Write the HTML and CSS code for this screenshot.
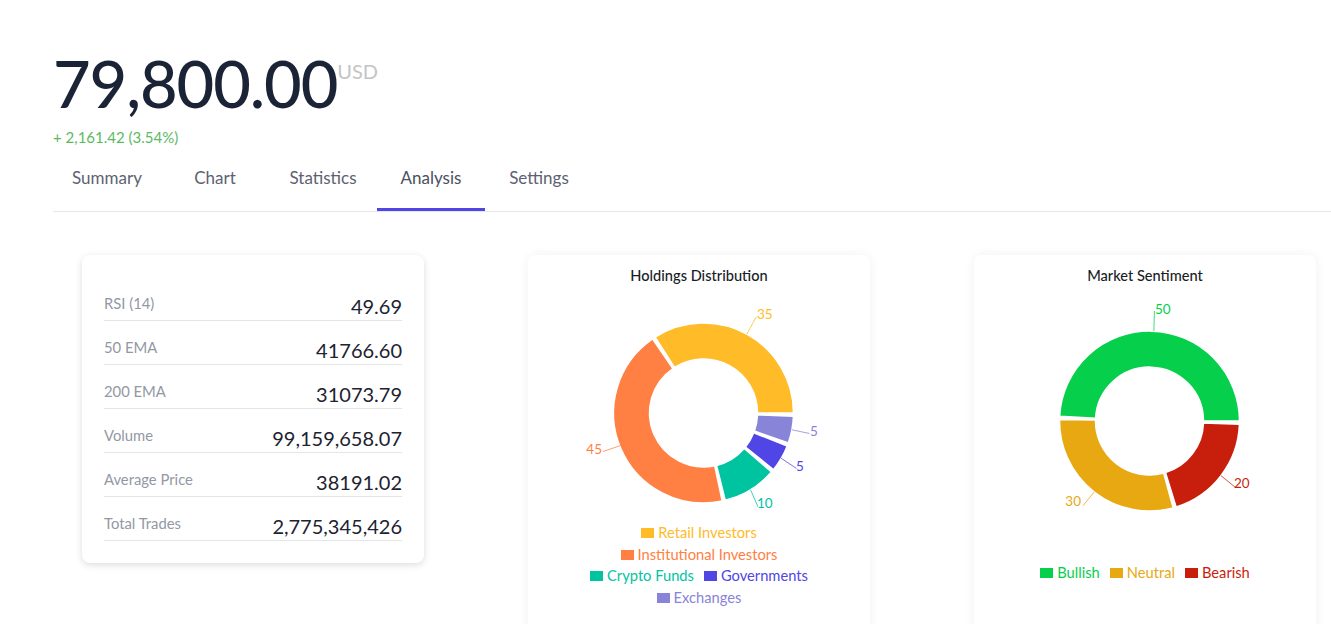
FILE: index.html
```html
<!DOCTYPE html>
<html lang="en">
<head>
<meta charset="utf-8">
<title>Analysis</title>
<link rel="stylesheet" href="styles.css">
</head>
<body>
<div class="page">
  <header class="quote">
    <div class="price-row">
      <span class="price">79,800.00</span>
      <span class="currency">USD</span>
    </div>
    <div class="change">+ 2,161.42 (3.54%)</div>
  </header>

  <nav class="tabs">
    <a class="tab">Summary</a>
    <a class="tab">Chart</a>
    <a class="tab">Statistics</a>
    <a class="tab tab--active">Analysis</a>
    <a class="tab">Settings</a>
  </nav>

  <section class="cards">
    <div class="card stats">
      <div class="stat"><span class="stat__label">RSI (14)</span><span class="stat__value">49.69</span></div>
      <div class="stat"><span class="stat__label">50 EMA</span><span class="stat__value">41766.60</span></div>
      <div class="stat"><span class="stat__label">200 EMA</span><span class="stat__value">31073.79</span></div>
      <div class="stat"><span class="stat__label">Volume</span><span class="stat__value">99,159,658.07</span></div>
      <div class="stat"><span class="stat__label">Average Price</span><span class="stat__value">38191.02</span></div>
      <div class="stat"><span class="stat__label">Total Trades</span><span class="stat__value">2,775,345,426</span></div>
    </div>

    <div class="card chart-card">
      <h3 class="chart-card__title">Holdings Distribution</h3>
      <svg class="donut donut--holdings" viewBox="0 0 342 232" width="342" height="232">
        <g stroke="#fff" stroke-width="1.5">
          <path fill="#FFBB28" d="M265.5 123 A90 90 0 0 0 127.14 47.09 L146.49 77.46 A54 54 0 0 1 229.5 123 Z"/>
          <path fill="#FF8042" d="M124.52 48.83 A90 90 0 0 0 194.21 211.03 L186.73 175.82 A54 54 0 0 1 144.91 78.50 Z"/>
          <path fill="#00C49F" d="M197.27 210.33 A90 90 0 0 0 243.42 182.05 L216.25 158.43 A54 54 0 0 1 188.56 175.40 Z"/>
          <path fill="#4F46E5" d="M245.44 179.64 A90 90 0 0 0 259.24 155.99 L225.74 142.79 A54 54 0 0 1 217.46 156.98 Z"/>
          <path fill="#8884D8" d="M260.33 153.04 A90 90 0 0 0 265.45 126.14 L229.47 124.88 A54 54 0 0 1 226.40 141.03 Z"/>
        </g>
        <g fill="none" stroke-width="1" opacity="0.75">
          <line x1="218.8" y1="44.1" x2="228.4" y2="26.6" stroke="#FFBB28"/>
          <line x1="92.8" y1="155.5" x2="75.0" y2="161.5" stroke="#FF8042"/>
          <line x1="222.5" y1="199.7" x2="230.0" y2="216.8" stroke="#00C49F"/>
          <line x1="253.2" y1="168.3" x2="268.5" y2="178.4" stroke="#4F46E5"/>
          <line x1="263.9" y1="139.8" x2="281.6" y2="143.5" stroke="#8884D8"/>
        </g>
        <g class="donut__labels">
          <text x="229" y="24" fill="#FFBB28">35</text>
          <text x="74" y="158.5" fill="#FF8042" text-anchor="end">45</text>
          <text x="229" y="213" fill="#00C49F">10</text>
          <text x="268" y="175.5" fill="#4F46E5">5</text>
          <text x="282" y="140.5" fill="#8884D8">5</text>
        </g>
      </svg>
      <ul class="legend legend--holdings">
        <li class="legend__item legend__item--retail"><i class="legend__icon"></i>Retail Investors</li>
        <li class="legend__item legend__item--inst"><i class="legend__icon"></i>Institutional Investors</li>
        <li class="legend__item legend__item--crypto"><i class="legend__icon"></i>Crypto Funds</li>
        <li class="legend__item legend__item--gov"><i class="legend__icon"></i>Governments</li>
        <li class="legend__item legend__item--exch"><i class="legend__icon"></i>Exchanges</li>
      </ul>
    </div>

    <div class="card chart-card">
      <h3 class="chart-card__title">Market Sentiment</h3>
      <svg class="donut donut--sentiment" viewBox="0 0 342 272" width="342" height="272">
        <g stroke="#fff" stroke-width="1.5">
          <path fill="#05CF4B" d="M265.5 131 A90 90 0 0 0 85.63 126.29 L121.58 128.18 A54 54 0 0 1 229.5 131 Z"/>
          <path fill="#E7A811" d="M85.52 129.42 A90 90 0 0 0 199.10 217.85 L189.66 183.11 A54 54 0 0 1 121.51 130.05 Z"/>
          <path fill="#C81E0C" d="M202.11 216.98 A90 90 0 0 0 265.45 134.14 L229.47 132.88 A54 54 0 0 1 191.47 182.59 Z"/>
        </g>
        <g fill="none" stroke-width="1" opacity="0.75">
          <line x1="179.9" y1="41" x2="180.4" y2="21" stroke="#05CF4B"/>
          <line x1="120.2" y1="202" x2="108.9" y2="215.8" stroke="#E7A811"/>
          <line x1="247" y1="185.7" x2="261.9" y2="197.8" stroke="#C81E0C"/>
        </g>
        <g class="donut__labels">
          <text x="181" y="19" fill="#05CF4B">50</text>
          <text x="107" y="211" fill="#E7A811" text-anchor="end">30</text>
          <text x="260" y="193" fill="#C81E0C">20</text>
        </g>
      </svg>
      <ul class="legend legend--sentiment">
        <li class="legend__item legend__item--bull"><i class="legend__icon"></i>Bullish</li>
        <li class="legend__item legend__item--neutral"><i class="legend__icon"></i>Neutral</li>
        <li class="legend__item legend__item--bear"><i class="legend__icon"></i>Bearish</li>
      </ul>
    </div>
  </section>
</div>
</body>
</html>
```

FILE: styles.css
```css
html, body {
  margin: 0;
  padding: 0;
  background: #ffffff;
  overflow: hidden;
}

body {
  font-family: Lato, "Liberation Sans", sans-serif;
  color: #1b2336;
}

.page {
  padding: 51px 0 0 53px;
}

/* Quote header */
.price-row {
  display: flex;
  align-items: flex-start;
}

.price {
  font-size: 65px;
  line-height: 65px;
  font-weight: 500;
  color: #1b2336;
  letter-spacing: -1.1px;
}

.currency {
  font-size: 20px;
  line-height: 20px;
  color: #c4c4c6;
  margin-top: 10px;
  margin-left: 0;
}

.change {
  margin-top: 11px;
  font-size: 15px;
  line-height: 20px;
  color: #5cba62;
}

/* Tabs */
.tabs {
  display: flex;
  margin-top: 8px;
  border-bottom: 1px solid #e6e6ec;
}

.tab {
  width: 108px;
  box-sizing: border-box;
  text-align: center;
  padding: 12px 0 19px;
  font-size: 17px;
  line-height: 22px;
  color: #5d6272;
  border-bottom: 3px solid transparent;
  cursor: pointer;
}

.tab--active {
  border-bottom-color: #4f46e5;
  color: #4a5060;
}

/* Cards */
.cards {
  display: grid;
  grid-template-columns: repeat(3, 342px);
  column-gap: 104px;
  align-items: start;
  margin-top: 43px;
  padding-left: 29px;
}

.card {
  background: #ffffff;
  border-radius: 8px;
}

.stats {
  padding: 21px 22px 22px;
  box-shadow: 0 2px 7px rgba(0, 0, 0, 0.14);
}

.stat {
  display: flex;
  justify-content: space-between;
  align-items: flex-end;
  height: 44px;
  box-sizing: border-box;
  padding-bottom: 2px;
  border-bottom: 1px solid #e3e5e9;
}

.stat:first-child {
  height: 45px;
}

.stat__label {
  font-size: 14.8px;
  line-height: 18px;
  color: #9298a4;
  margin-bottom: 6px;
}

.stat__value {
  font-size: 20px;
  line-height: 24px;
  color: #1c2331;
}

.chart-card {
  min-height: 420px;
  box-shadow: 0 0 12px rgba(0, 0, 0, 0.06);
}

.chart-card__title {
  margin: 0 0 5px;
  padding-top: 12px;
  text-align: center;
  font-size: 14.6px;
  line-height: 18px;
  font-weight: 500;
  color: #1a1d26;
}

.donut {
  display: block;
}

.donut__labels text {
  font-family: Lato, "Liberation Sans", sans-serif;
  font-size: 13.5px;
  dominant-baseline: central;
}

/* Legends */
.legend {
  list-style: none;
  margin: 0 auto;
  padding: 0;
  display: flex;
  flex-wrap: wrap;
  justify-content: center;
  column-gap: 10px;
  font-size: 14.7px;
  line-height: 21.7px;
}

.legend--holdings {
  width: 250px;
}

.legend__item {
  display: flex;
  align-items: center;
}

.legend__icon {
  display: inline-block;
  width: 13px;
  height: 10px;
  margin-right: 4px;
  background: currentColor;
}

.legend__item--retail { color: #FFBB28; }
.legend__item--inst { color: #FF8042; }
.legend__item--crypto { color: #00C49F; }
.legend__item--gov { color: #4F46E5; }
.legend__item--exch { color: #8884D8; }
.legend__item--bull { color: #05CF4B; }
.legend__item--neutral { color: #E7A811; }
.legend__item--bear { color: #C81E0C; }
```
